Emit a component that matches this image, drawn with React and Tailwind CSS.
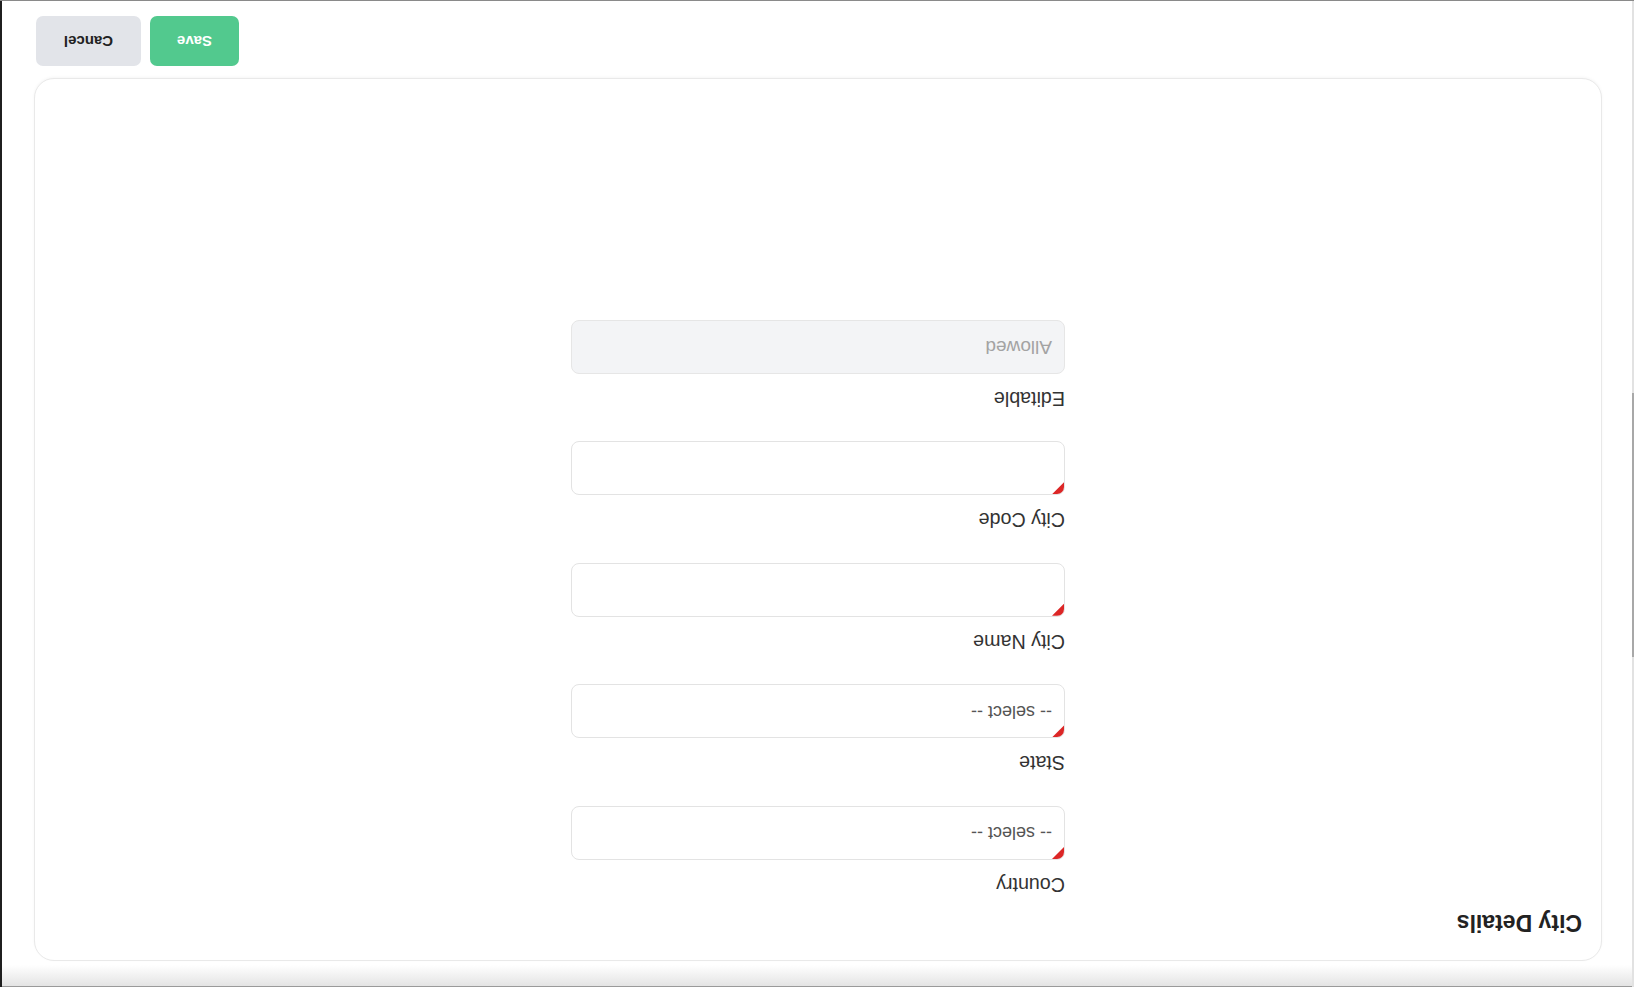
export default function App() {
  const fields = [
    { label: 'Country', value: '-- select --', required: true },
    { label: 'State', value: '-- select --', required: true },
    { label: 'City Name', value: '', required: true },
    { label: 'City Code', value: '', required: true },
    { label: 'Editable', value: 'Allowed', disabled: true },
  ];
  return (
    <div className="w-[1634px] h-[987px] overflow-hidden bg-white">
      <div className="relative w-[1634px] h-[987px] rotate-180 bg-white font-['Liberation_Sans',Arial,sans-serif]">
        <div className="h-[22px] border-t border-[#9a9a9a] bg-linear-to-b from-[#e4e4e4] to-white" />
        <div className="ml-[32px] mt-[4px] w-[1568px] h-[883px] rounded-[20px] border border-[#e9e9e9] bg-white shadow-[0_1px_3px_rgba(0,0,0,0.04)] px-[19px] pt-[21px]">
          <h2 className="text-[23px] leading-[32px] font-bold text-[#222]">City Details</h2>
          <div className="mx-auto mt-[8px] w-[494px] flex flex-col gap-[28.6px]">
            {fields.map((f) => (
              <div key={f.label} className="flex flex-col">
                <label className="text-[19.7px] leading-[28px] text-[#333]">{f.label}</label>
                <div
                  className={
                    f.disabled
                      ? 'relative mt-[11px] h-[54px] rounded-[8px] border border-[#e6e6e6] bg-[#f3f4f6] overflow-hidden flex items-center pl-[12px] text-[19px] text-[#a3a3a3]'
                      : 'relative mt-[11px] h-[54px] rounded-[8px] border border-[#e3e3e3] bg-white overflow-hidden flex items-center pl-[12px] text-[18px] text-[#555]'
                  }
                >
                  {f.required && (
                    <span className="absolute left-0 top-0 w-[12px] h-[12px] bg-[#dc2626] [clip-path:polygon(0_0,100%_0,0_100%)]" />
                  )}
                  {f.value}
                </div>
              </div>
            ))}
          </div>
        </div>
        <div className="ml-[32px] mt-[12px] w-[1568px] flex justify-end gap-[9px] pr-[2px]">
          <button className="w-[89px] h-[50px] rounded-[7px] bg-[#52c98e] text-white font-bold text-[15px]">Save</button>
          <button className="w-[105px] h-[50px] rounded-[7px] bg-[#e2e4e9] text-[#222] font-bold text-[15px]">Cancel</button>
        </div>
        <div className="absolute right-0 top-0 h-full w-[2px] bg-[#1f1f1f]" />
        <div className="absolute left-0 top-0 h-full w-[2px] bg-[#e2e2e2]" />
        <div className="absolute left-0 top-[330px] h-[264px] w-[2px] bg-[#a8a8a8]" />
        <div className="absolute bottom-0 left-0 w-full h-px bg-[#8a8a8a]" />
      </div>
    </div>
  );
}
